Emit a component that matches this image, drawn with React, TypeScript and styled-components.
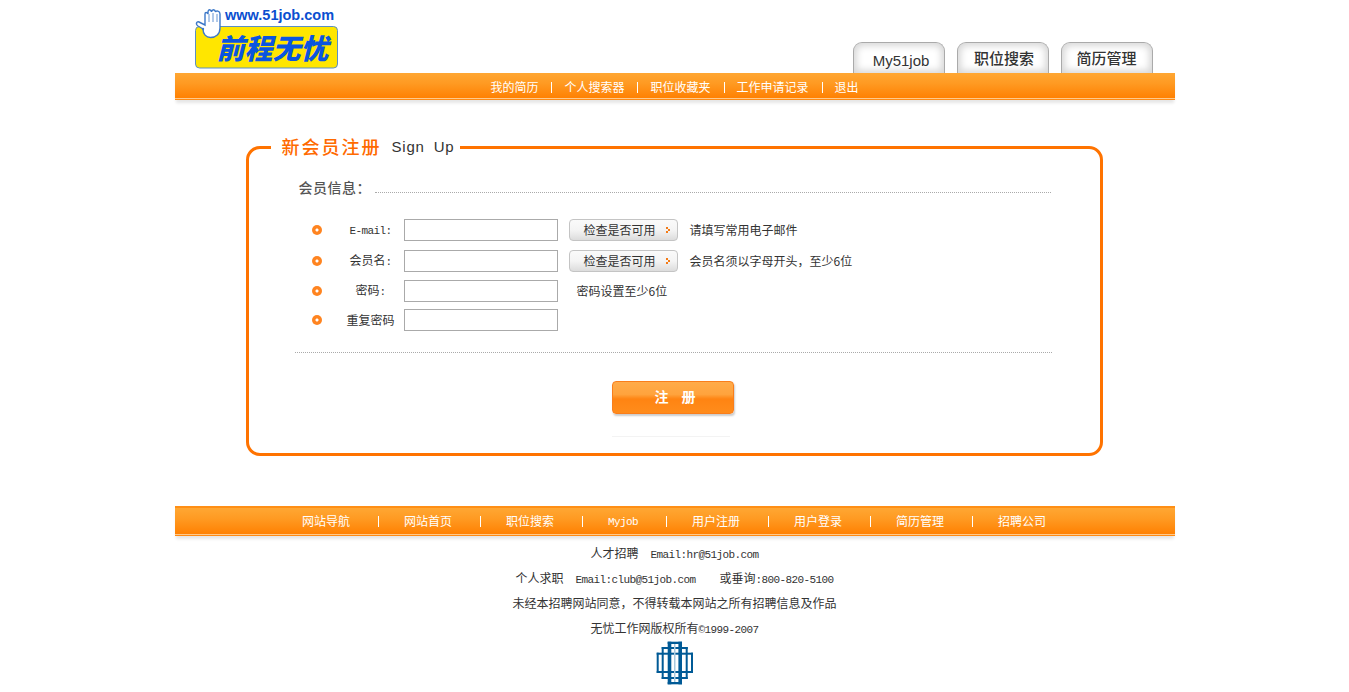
import React from 'react';
import styled, { createGlobalStyle } from 'styled-components';

const GlobalStyle = createGlobalStyle`
  html, body {
    margin: 0;
    padding: 0;
    background: #fff;
    color: #333;
    font-family: "Noto Sans CJK SC", "Liberation Sans", sans-serif;
    font-size: 12px;
  }
`;

const topLinks = ['我的简历', '个人搜索器', '职位收藏夹', '工作申请记录', '退出'];
const bottomLinks = ['网站导航', '网站首页', '职位搜索', 'Myjob', '用户注册', '用户登录', '简历管理', '招聘公司'];

const Page = styled.div`
  width: 1000px;
  margin: 0 auto;
`;

const Header = styled.header`
  height: 73px;
  display: flex;
  justify-content: space-between;
  align-items: flex-end;
  padding: 0 22px 0 20px;
  box-sizing: border-box;
`;

const LogoSvg = styled.svg`
  display: block;
  width: 145px;
  height: 69px;
`;

const Tabs = styled.nav`
  display: flex;
  gap: 12px;
`;

const Tab = styled.a<{ $latin?: boolean; $shift?: number }>`
  width: 92px;
  height: 31px;
  box-sizing: border-box;
  border: 1px solid #aaa;
  border-bottom: 0;
  border-radius: 9px 9px 0 0;
  background: #fff;
  box-shadow: inset 0 0 7px 3px #d8d8d8;
  color: #333;
  display: flex;
  justify-content: center;
  align-items: flex-start;
  padding-top: ${(p) => (p.$latin ? '8px' : '5px')};
  padding-left: ${(p) => p.$shift ?? 0}px;
  font-size: 15px;
  font-weight: ${(p) => (p.$latin ? 400 : 500)};
  line-height: 20px;
  font-family: ${(p) => (p.$latin ? '"Liberation Sans", Arial, sans-serif' : '"Noto Sans CJK SC", sans-serif')};
`;

const Bar = styled.div<{ $tall?: boolean }>`
  height: ${(p) => (p.$tall ? '30px' : '27px')};
  box-sizing: border-box;
  display: flex;
  justify-content: center;
  align-items: center;
  background: linear-gradient(#ffa733 0%, #ff9a22 40%, #ff7f00 100%);
  border-top: ${(p) => (p.$tall ? '2px solid #ff8f15' : '0')};
  border-bottom: 1px solid #ff8a12;
  box-shadow: inset 0 -1px 0 #ffc98a, 0 4px 3px -1px #e6e6e6;
  padding: ${(p) => (p.$tall ? '0 1px 1px 0' : '2px 0 0')};
`;

const BarLink = styled.a`
  color: #fff;
  font-size: 12px;
  line-height: 16px;
  white-space: nowrap;
`;

const Divider = styled.i<{ $wide?: boolean }>`
  display: block;
  width: 1px;
  height: 11px;
  background: #fff;
  margin: ${(p) => (p.$wide ? '0 25px 0 28px' : '0 12px 0 13px')};
`;

const Main = styled.main`
  padding: 36px 72px 50px 71px;
`;

const Panel = styled.fieldset`
  margin: 0;
  padding: 0 47px 0 46px;
  height: 320px;
  box-sizing: border-box;
  border: 3px solid #ff7300;
  border-radius: 14px;
`;

const PanelLegend = styled.legend`
  margin-left: -24px;
  padding: 0 6px 2px 11px;
  box-sizing: border-box;
  display: flex;
  align-items: center;
  height: 22px;
`;

const LegendCn = styled.span`
  color: #ff6a00;
  font-size: 18px;
  letter-spacing: 2px;
  font-weight: 500;
  line-height: 20px;
`;

const LegendEn = styled.span`
  margin-left: 10px;
  font-family: "Liberation Sans", Arial, sans-serif;
  color: #333;
  font-size: 15px;
  word-spacing: 4px;
  letter-spacing: 0.8px;
`;

const SectionTitle = styled.div`
  display: flex;
  align-items: flex-end;
  height: 20px;
  margin: 19px 2px 0 4px;
  font-size: 14px;
  font-weight: 500;
  letter-spacing: 0.5px;
  line-height: 20px;
  color: #555;
`;

const TitleRule = styled.span`
  flex: 1;
  margin: 0 0 4px 4px;
  border-bottom: 1px dotted #aaa;
`;

const FieldRow = styled.div<{ $after: number; $first?: boolean }>`
  display: grid;
  grid-template-columns: 41px 68px max-content 1fr;
  height: 22px;
  align-items: center;
  margin-top: ${(p) => (p.$first ? '22px' : '0')};
  margin-bottom: ${(p) => p.$after}px;
`;

const Bullet = styled.span`
  justify-self: center;
  margin-left: 3px;
  width: 10px;
  height: 10px;
  border-radius: 50%;
  background: radial-gradient(circle, #fff 0 1px, #ff8420 2px);
`;

const FieldLabel = styled.label`
  padding-left: 2px;
  text-align: center;
  white-space: nowrap;
  line-height: 16px;
`;

const Mono = styled.span`
  font-family: "Liberation Mono", "Courier New", monospace;
  font-size: 11px;
  letter-spacing: -0.6px;
  white-space: pre;
`;

const TextBox = styled.input`
  display: block;
  width: 154px;
  height: 22px;
  margin: 0;
  padding: 0 2px;
  box-sizing: border-box;
  border: 1px solid #aaa;
  background: #fff;
  outline: none;
`;

const Aside = styled.div<{ $offset?: number }>`
  display: flex;
  align-items: center;
  margin-left: ${(p) => p.$offset ?? 11}px;
  gap: 12px;
  white-space: nowrap;
  line-height: 16px;
`;

const CheckButton = styled.button`
  width: 109px;
  height: 22px;
  box-sizing: border-box;
  border: 1px solid #c4c4c4;
  border-radius: 4px;
  background: linear-gradient(#fafafa, #f4f4f4 50%, #dcdcdc);
  padding: 0 0 0 3px;
  display: flex;
  align-items: center;
  justify-content: flex-start;
  color: #333;
  font-family: inherit;
  font-size: 12px;
  line-height: 16px;
  gap: 10px;
  text-indent: 11px;
`;

const Arrow = styled.svg`
  display: block;
  width: 4px;
  height: 6px;
  flex: none;
`;

const Separator = styled.div`
  margin: 21px 1px 0 0;
  border-bottom: 1px dotted #aaa;
`;

const SubmitWrap = styled.div`
  display: flex;
  flex-direction: column;
  align-items: center;
  margin: 28px 0 0;
`;

const SubmitButton = styled.button`
  width: 122px;
  height: 33px;
  box-sizing: border-box;
  border: 1px solid #f97e1c;
  border-radius: 4px;
  background: linear-gradient(#ffab4a 0%, #ffa33d 40%, #ff8412 55%, #ff8c1c 100%);
  box-shadow: 1px 2px 2px #ccc;
  color: #fff;
  font-family: inherit;
  font-size: 14px;
  font-weight: 700;
  letter-spacing: 13px;
  text-indent: 17px;
  padding: 0 0 4px;
  margin-right: 1px;
`;

const FaintLine = styled.div`
  width: 118px;
  margin: 22px 6px 0 0;
  border-bottom: 1px solid #f3f3f3;
`;

const Footer = styled.footer`
  padding-top: 4px;
  text-align: center;
  color: #333;
`;

const FooterLine = styled.p`
  margin: 0;
  height: 25px;
  line-height: 25px;
  white-space: pre;
`;

const FooterMark = styled.svg`
  display: block;
  width: 38px;
  height: 44px;
  margin: 1px auto 0;
`;

const Logo = () => (
  <LogoSvg viewBox="0 -5 145 69" aria-label="前程无忧">
    <rect x="0.5" y="17.5" width="142" height="41.500" rx="4" fill="#ffe600" stroke="#5b8fc4" />
    <text x="30" y="10.500" fill="#0b4fd0" fontFamily="Liberation Sans, Arial, sans-serif" fontSize="14.500" fontWeight="700">
      www.51job.com
    </text>
    <text
      x="22"
      y="50"
      fill="#0a55e0"
      fontFamily="Noto Sans CJK SC, sans-serif"
      fontSize="28"
      fontWeight="900"
      transform="skewX(-14) translate(12 0)"
    >
      前程无忧
    </text>
    <path
      d="M8 20 L3 17 C0 15 2 12 4 13 L10 16 L10 5 C10 3 12 3 13 5 L13 3 C13 0 16 0 16.500 3 C17 0 20 0 20.500 3 C21 1 25 2 25 5 L25 19 C25 25 21 28.500 15.500 28.500 C11 28.500 8 25 8 20 Z"
      fill="#fff"
      stroke="#3c78c8"
      strokeWidth="1.400"
    />
    <path d="M14 5 V13 M18 4 V13 M22 5 V13" stroke="#3c78c8" strokeWidth="0.800" fill="none" />
    <circle cx="8" cy="20" r="1.200" fill="#3c78c8" />
  </LogoSvg>
);

const RowArrow = () => (
  <Arrow viewBox="0 0 4 6">
    <path d="M0 0h2v2H0zM2 2h2v2H2zM0 4h2v2H0z" fill="#f47b16" />
  </Arrow>
);

const Mark = () => (
  <FooterMark viewBox="0 0 38 44" aria-hidden="true">
    <g fill="#005a96">
      {/* outer block */}
      <rect x="0.700" y="11.700" width="2" height="20.300" />
      <rect x="35" y="11.700" width="2" height="20.300" />
      <rect x="0.700" y="11.700" width="36.300" height="2" />
      <rect x="0.700" y="30" width="36.300" height="2" />
      {/* middle block */}
      <rect x="5.700" y="6" width="2" height="32" />
      <rect x="29.700" y="6" width="2" height="32" />
      <rect x="5.700" y="6" width="26" height="2" />
      <rect x="5.700" y="36" width="26" height="2" />
      {/* centre block */}
      <rect x="11.700" y="0.700" width="3.600" height="42.600" />
      <rect x="22.400" y="0.700" width="3.600" height="42.600" />
      <rect x="11.700" y="0.700" width="14.300" height="2.300" />
      <rect x="11.700" y="41" width="14.300" height="2.300" />
    </g>
    <rect x="18" y="3" width="1.500" height="38" fill="#a9c9de" />
  </FooterMark>
);

const CheckBtn = () => (
  <CheckButton type="button">
    <span>检查是否可用</span>
    <RowArrow />
  </CheckButton>
);

export default function App() {
  return (
    <Page>
      <GlobalStyle />
      <Header>
        <Logo />
        <Tabs>
          <Tab $latin $shift={5}>My51job</Tab>
          <Tab $shift={3}>职位搜索</Tab>
          <Tab>简历管理</Tab>
        </Tabs>
      </Header>
      <Bar>
        {topLinks.map((l, i) => (
          <React.Fragment key={l}>
            {i > 0 && <Divider />}
            <BarLink>{l}</BarLink>
          </React.Fragment>
        ))}
      </Bar>
      <Main>
        <Panel>
          <PanelLegend>
            <LegendCn>新会员注册</LegendCn>
            <LegendEn>Sign Up</LegendEn>
          </PanelLegend>
          <SectionTitle>
            会员信息：
            <TitleRule />
          </SectionTitle>
          <FieldRow $first $after={9}>
            <Bullet />
            <FieldLabel>
              <Mono>E-mail:</Mono>
            </FieldLabel>
            <TextBox />
            <Aside>
              <CheckBtn />
              请填写常用电子邮件
            </Aside>
          </FieldRow>
          <FieldRow $after={8}>
            <Bullet />
            <FieldLabel>
              会员名<Mono>:</Mono>
            </FieldLabel>
            <TextBox />
            <Aside>
              <CheckBtn />
              <span>会员名须以字母开头，至少6位</span>
            </Aside>
          </FieldRow>
          <FieldRow $after={7}>
            <Bullet />
            <FieldLabel>
              密码<Mono>:</Mono>
            </FieldLabel>
            <TextBox />
            <Aside $offset={19}>密码设置至少6位</Aside>
          </FieldRow>
          <FieldRow $after={0}>
            <Bullet />
            <FieldLabel>重复密码</FieldLabel>
            <TextBox />
          </FieldRow>
          <Separator />
          <SubmitWrap>
            <SubmitButton type="button">注册</SubmitButton>
            <FaintLine />
          </SubmitWrap>
        </Panel>
      </Main>
      <Bar $tall>
        {bottomLinks.map((l, i) => (
          <React.Fragment key={l}>
            {i > 0 && <Divider $wide />}
            <BarLink>{l === 'Myjob' ? <Mono>{l}</Mono> : l}</BarLink>
          </React.Fragment>
        ))}
      </Bar>
      <Footer>
        <FooterLine>
          人才招聘<Mono>  Email:hr@51job.com</Mono>
        </FooterLine>
        <FooterLine>
          个人求职<Mono>  Email:club@51job.com    </Mono>或垂询<Mono>:800-820-5100</Mono>
        </FooterLine>
        <FooterLine>未经本招聘网站同意，不得转载本网站之所有招聘信息及作品</FooterLine>
        <FooterLine>
          无忧工作网版权所有<Mono>©1999-2007</Mono>
        </FooterLine>
        <Mark />
      </Footer>
    </Page>
  );
}
